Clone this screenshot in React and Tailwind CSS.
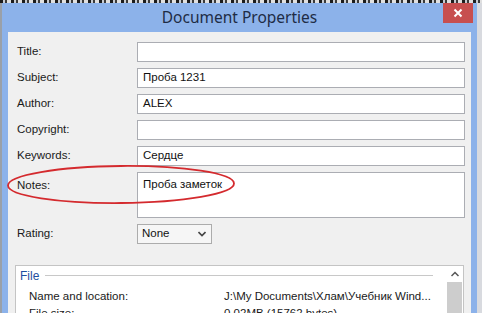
import React from "react";

const lbl = "text-[11.5px] text-[#1a1a1a]";
const inp = "h-[20px] flex-1 bg-white border border-[#abadb3] flex items-center px-[5px] text-[11.5px] text-[#111]";

function Row({ label, value }) {
  return (
    <div className="flex items-center h-[20px]">
      <div className={`w-[120px] shrink-0 ${lbl}`}>{label}</div>
      <div className={inp}>{value}</div>
    </div>
  );
}

export default function App() {
  return (
    <div
      className="w-[482px] h-[313px] overflow-hidden relative bg-[#2e333b] flex flex-col"
      style={{ fontFamily: '"Liberation Sans", "Noto Sans", sans-serif' }}
    >
      <div className="h-[3px] shrink-0 bg-[repeating-linear-gradient(90deg,#1c1c1c_0px,#1c1c1c_3px,#c8ccd2_3px,#c8ccd2_5px,#3a3a3a_5px,#3a3a3a_7px,#e0e0e0_7px,#e0e0e0_11px)]" />
      <div className="flex flex-1 min-h-0">
        <div className="w-[2px] bg-[#9aa0a8] shrink-0" />
        <div className="w-[475px] bg-[#8cb2ea] flex flex-col px-[6px] shrink-0">
          <div className="h-[29px] shrink-0 flex items-center justify-center relative">
            <span
              className="text-[15.5px] text-[#1e2c45] mt-[1px]"
              style={{ fontFamily: '"Noto Sans", "Open Sans", sans-serif' }}
            >
              Document Properties
            </span>
            <div className="absolute right-[-2px] top-0 w-[30px] h-[20px] bg-[#c74f4f] flex items-center justify-center">
              <svg width="10" height="10" viewBox="0 0 10 10">
                <path d="M1.5 1.5 L8.5 8.5 M8.5 1.5 L1.5 8.5" stroke="white" strokeWidth="2" />
              </svg>
            </div>
          </div>
          <div className="flex-1 bg-[#f0f0f0] relative flex flex-col pt-[10px] pl-[9px] pr-[6px]">
            <div className="flex flex-col gap-[6px]">
              <Row label="Title:" value="" />
              <Row label="Subject:" value="Проба 1231" />
              <Row label="Author:" value="ALEX" />
              <Row label="Copyright:" value="" />
              <Row label="Keywords:" value="Сердце" />
              <div className="flex items-start h-[46px]">
                <div className={`w-[120px] shrink-0 pt-[5px] ${lbl}`}>Notes:</div>
                <div className="flex-1 h-[46px] bg-white border border-[#abadb3] px-[5px] pt-[3px] text-[11.5px] text-[#111]">
                  Проба заметок
                </div>
              </div>
              <div className="flex items-center h-[20px]">
                <div className={`w-[120px] shrink-0 ${lbl}`}>Rating:</div>
                <div className="w-[75px] h-[20px] bg-[#f6f6f6] border border-[#acacac] flex items-center justify-between pl-[4px] pr-[5px] text-[11.5px] text-[#111]">
                  <span>None</span>
                  <svg width="8" height="6" viewBox="0 0 8 6">
                    <path d="M0.5 1 L4 4.5 L7.5 1" stroke="#444" strokeWidth="1.6" fill="none" />
                  </svg>
                </div>
              </div>
            </div>
            <div className="mt-[21px] ml-[-2px] mr-[1px] bg-white border border-[#c4c4c4] border-b-0 flex-1 flex">
              <div className="flex-1 flex flex-col pl-[4px] pt-[1px]">
                <div className="flex items-center h-[17px]">
                  <span className="text-[12px] text-[#1e4fa0]">File</span>
                  <div className="ml-[6px] mr-[14px] flex-1 h-px bg-[#c8c8c8]" />
                </div>
                <div className="flex h-[17px] items-center mt-[4px] text-[11.5px] text-[#1a1a1a]">
                  <span className="w-[204px] pl-[9px]">Name and location:</span>
                  <span>J:\My Documents\Хлам\Учебник Wind...</span>
                </div>
                <div className="flex h-[17px] items-center text-[11.5px] text-[#1a1a1a]">
                  <span className="w-[204px] pl-[9px]">File size:</span>
                  <span>0,02MB (15762 bytes)</span>
                </div>
              </div>
              <div className="w-[15px] mr-[1px] flex flex-col">
                <div className="h-[16px] flex items-center justify-center">
                  <svg width="8" height="6" viewBox="0 0 8 6">
                    <path d="M0.5 5 L4 1.5 L7.5 5" stroke="#555" strokeWidth="1.5" fill="none" />
                  </svg>
                </div>
                <div className="flex-1 bg-[#cdcdcd]" />
              </div>
            </div>
            <svg className="absolute left-[-2px] top-[132px] pointer-events-none" width="232" height="42" viewBox="0 0 232 42">
              <ellipse cx="115" cy="20.5" rx="113" ry="18.5" fill="none" stroke="#d42a2e" strokeWidth="1.8" transform="rotate(-0.5 115 20.5)" />
            </svg>
          </div>
        </div>
        <div className="flex-1 bg-[#d8dadf]" />
      </div>
    </div>
  );
}
